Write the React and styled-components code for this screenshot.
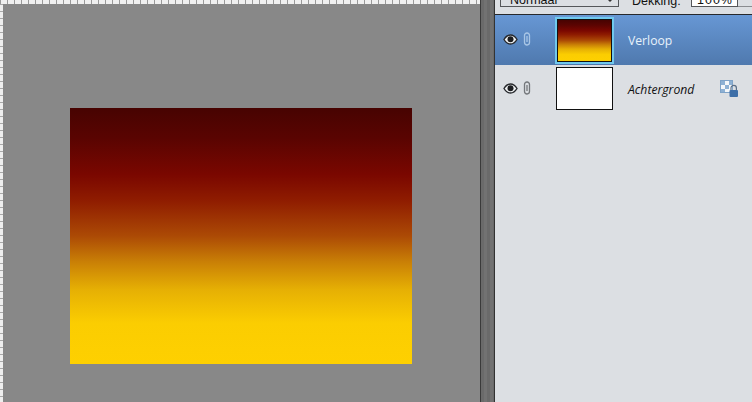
import React from "react";
import styled, { createGlobalStyle } from "styled-components";

const GlobalStyle = createGlobalStyle`
  html, body {
    margin: 0;
    padding: 0;
    background: #dcdfe3;
  }
  * {
    box-sizing: border-box;
  }
`;

const GRADIENT = `linear-gradient(180deg,
  #470301 0%, #5a0401 12%, #7a0700 26%, #8f1c00 36%, #ac4a05 50%,
  #c97f06 60%, #e6b004 71%, #fbcd01 84%, #fed000 100%)`;

const Window = styled.div`
  display: flex;
  width: 752px;
  height: 402px;
  overflow: hidden;
  font-family: "Liberation Sans", Arial, sans-serif;
`;

const Workspace = styled.div`
  display: grid;
  flex: none;
  grid-template-columns: 3px 1fr;
  grid-template-rows: 4px 1fr;
  width: 480px;
  background: #888888;
`;

const TopRuler = styled.div`
  grid-column: 1 / 3;
  background:
    repeating-linear-gradient(90deg, #9a9a9a 0 1px, transparent 1px 7px),
    #f0f0f0;
`;

const SideRuler = styled.div`
  background:
    repeating-linear-gradient(180deg, #a8a8a8 0 1px, transparent 1px 7px),
    #eeeeee;
`;

const Canvas = styled.div`
  padding: 104px 0 0 67px;
`;

const Artwork = styled.div`
  width: 342px;
  height: 256px;
  background: ${GRADIENT};
`;

const Splitter = styled.div`
  flex: none;
  width: 15px;
  border-left: 1px solid #3a3a3a;
  border-right: 1px solid #333333;
  background: repeating-linear-gradient(90deg, #6a6a6a 0 3px, #727272 3px 6px);
`;

const Panel = styled.div`
  display: flex;
  flex-direction: column;
  flex: 1;
  min-width: 0;
  background: #dcdfe3;
`;

const Toolbar = styled.div`
  display: flex;
  flex: none;
  align-items: flex-end;
  height: 15px;
  padding: 0 0 7px 5px;
  overflow: hidden;
  border-bottom: 1px solid #26282c;
  font-size: 12.5px;
  color: #111111;
`;

const BlendSelect = styled.div`
  display: flex;
  flex: none;
  align-items: flex-end;
  justify-content: space-between;
  width: 119px;
  height: 20px;
  padding: 0 5px 0 9px;
  border: 1px solid #55575a;
  border-top: none;
  line-height: 11px;
`;

const Caret = styled.span`
  margin-bottom: 4px;
  border-left: 3px solid transparent;
  border-right: 3px solid transparent;
  border-top: 3px solid #333333;
`;

const OpacityLabel = styled.span`
  flex: none;
  width: 48px;
  margin-left: 13px;
  line-height: 11px;
  white-space: nowrap;
`;

const OpacityInput = styled.div`
  flex: none;
  width: 47px;
  height: 20px;
  margin-left: 11px;
  padding: 8px 0 0 5px;
  border: 1px solid #55575a;
  border-top: none;
  background: #ffffff;
  line-height: 11px;
  letter-spacing: 1px;
`;

const OpacityButton = styled.div`
  display: flex;
  flex: none;
  justify-content: center;
  align-items: flex-end;
  width: 15px;
  height: 20px;
  padding-bottom: 3px;
  border-bottom: 1px solid #8a8c90;
`;

const Layer = styled.div`
  display: flex;
  flex: none;
  align-items: center;
  height: ${(p) => (p.$active ? "50px" : "49px")};
  padding-left: ${(p) => (p.$active ? "60px" : "61px")};
  position: relative;
  background: ${(p) =>
    p.$active ? "linear-gradient(180deg, #6797d4 0%, #4f79ae 100%)" : "transparent"};
`;

const LayerIcons = styled.div`
  display: flex;
  align-items: center;
  gap: 5px;
  position: absolute;
  left: 8px;
  top: ${(p) => (p.$active ? "17px" : "16px")};
`;

const Thumb = styled.div`
  flex: none;
  width: ${(p) => (p.$active ? "59px" : "57px")};
  height: ${(p) => (p.$active ? "47px" : "43px")};
  margin-top: ${(p) => (p.$active ? "0" : "-2px")};
  border: 1px solid #111111;
  background: #ffffff;
  ${(p) =>
    p.$active &&
    `
    border: 2px solid #70c9ee;
    background: #111111;
    padding: 1px;
  `}
`;

const ThumbFill = styled.div`
  width: 100%;
  height: 100%;
  background: ${GRADIENT};
`;

const LayerName = styled.span`
  margin-left: ${(p) => (p.$active ? "14px" : "15px")};
  font-size: 12.2px;
  font-family: "Open Sans", "Liberation Sans", sans-serif;
  font-style: ${(p) => (p.$active ? "normal" : "italic")};
  color: ${(p) => (p.$active ? "#e8f2fb" : "#111111")};
`;

const LockBadge = styled.div`
  position: absolute;
  left: 225px;
  top: 15px;
`;

const Eye = () => (
  <svg width="15" height="11" viewBox="0 0 15 11">
    <path
      d="M1 5.5C3 2.2 5 1 7.5 1S12 2.2 14 5.5C12 8.8 10 10 7.5 10S3 8.8 1 5.5Z"
      fill="#f1f3f4"
      stroke="#26282c"
      strokeWidth="1.4"
    />
    <circle cx="7.5" cy="5.3" r="3" fill="#1c1d20" />
  </svg>
);

const Link = ({ color }) => (
  <svg width="8" height="14" viewBox="0 0 8 14">
    <rect x="1.5" y="1" width="5" height="12" rx="2.4" fill="none" stroke={color} strokeWidth="1.3" />
    <path d="M4 4v6" stroke={color} strokeWidth="1.3" />
  </svg>
);

const LockedChecker = () => (
  <svg width="19" height="18" viewBox="0 0 19 18">
    <rect x="0.5" y="0.5" width="12" height="12" fill="#f4f7fa" stroke="#7fa3c8" />
    <rect x="1" y="1" width="4" height="4" fill="#8eb1d4" />
    <rect x="5" y="5" width="4" height="4" fill="#8eb1d4" />
    <rect x="1" y="9" width="4" height="3" fill="#8eb1d4" />
    <rect x="9" y="1" width="3" height="4" fill="#8eb1d4" />
    <path d="M11 10V8a2.7 2.7 0 0 1 5.4 0v2" fill="none" stroke="#5a6f88" strokeWidth="1.2" />
    <rect x="9.5" y="10" width="8.5" height="7" rx="1" fill="#3e6fa8" />
  </svg>
);

const LAYERS = [
  { name: "Verloop", active: true },
  { name: "Achtergrond", active: false },
];

export default function App() {
  return (
    <Window>
      <GlobalStyle />
      <Workspace>
        <TopRuler />
        <SideRuler />
        <Canvas>
          <Artwork />
        </Canvas>
      </Workspace>
      <Splitter />
      <Panel>
        <Toolbar>
          <BlendSelect>
            Normaal
            <Caret />
          </BlendSelect>
          <OpacityLabel>Dekking:</OpacityLabel>
          <OpacityInput>100%</OpacityInput>
          <OpacityButton>
            <Caret />
          </OpacityButton>
        </Toolbar>
        {LAYERS.map((layer) => (
          <Layer key={layer.name} $active={layer.active}>
            <LayerIcons $active={layer.active}>
              <Eye />
              <Link color={layer.active ? "#a9c6e6" : "#74777b"} />
            </LayerIcons>
            <Thumb $active={layer.active}>{layer.active && <ThumbFill />}</Thumb>
            <LayerName $active={layer.active}>{layer.name}</LayerName>
            {!layer.active && (
              <LockBadge>
                <LockedChecker />
              </LockBadge>
            )}
          </Layer>
        ))}
      </Panel>
    </Window>
  );
}
